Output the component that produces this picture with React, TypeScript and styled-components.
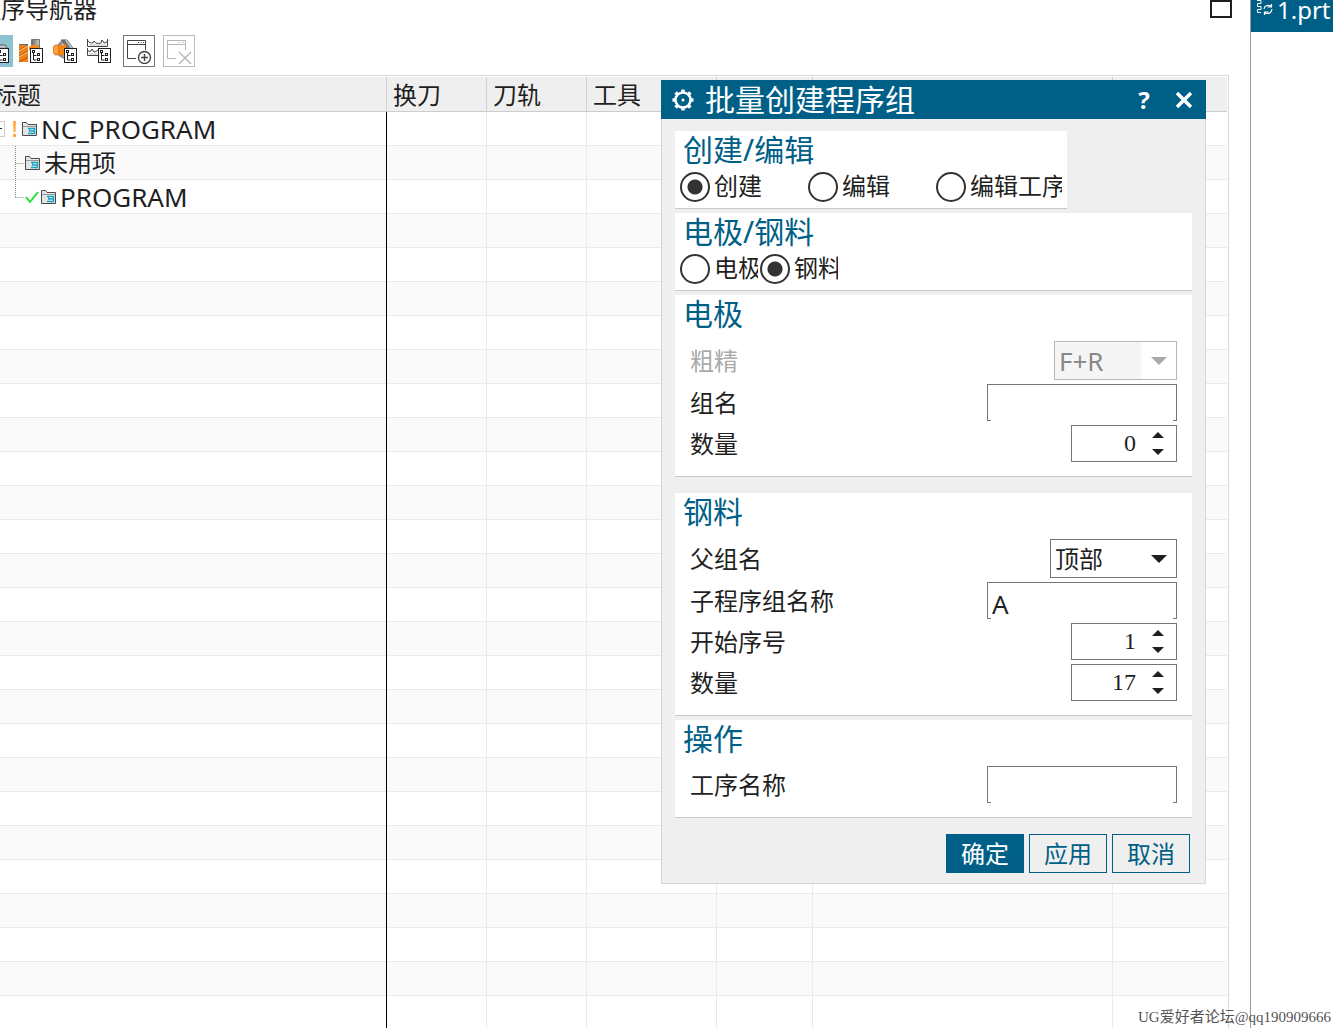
import React, { useState } from "react";
import styled, { createGlobalStyle } from "styled-components";

const blue = "#005f87";
const ink = "#1f1f1f";
const sans = `"Noto Sans", "Noto Sans CJK SC", sans-serif`;

const GlobalStyle = createGlobalStyle`
  *, *::before, *::after { box-sizing: border-box; }
  body {
    margin: 0;
    background: #fff;
    color: ${ink};
    font-family: ${sans};
    font-size: 24px;
    overflow: hidden;
  }
  button, input, select { font: inherit; color: inherit; margin: 0; }
`;

const Workspace = styled.div`
  position: relative;
  display: flex;
  height: 100vh;
  overflow: hidden;
`;

/* The navigator is docked partly beyond the left edge of the window. */
const Navigator = styled.section`
  flex: 1;
  min-width: 0;
  margin-left: -24px;
  display: flex;
  flex-direction: column;
`;

const NavigatorHeader = styled.header`
  display: flex;
  justify-content: space-between;
  align-items: flex-start;
  height: 28px;
  padding: 0 18px 0 1px;
`;

const NavigatorTitle = styled.h1`
  margin: 0;
  font-size: 24px;
  line-height: 18px;
  font-weight: 400;
`;

const MaximizeButton = styled.button`
  width: 22px;
  height: 18px;
  padding: 0;
  background: none;
  border: 2px solid ${ink};
`;

const Toolbar = styled.div`
  display: flex;
  align-items: center;
  padding: 7px 0 8px 5px;
`;

const ToolButton = styled.button<{ $active?: boolean; $framed?: string }>`
  display: grid;
  place-items: center;
  width: 32px;
  height: 32px;
  padding: 0;
  margin-right: ${(p) => (p.$framed ? 8 : 2)}px;
  border: ${(p) => (p.$framed ? `1px solid ${p.$framed}` : "none")};
  background: ${(p) => (p.$active ? "#8cc3d3" : "transparent")};
`;

const ToolGroup = styled.div`
  display: flex;
  margin-right: 6px;
`;

const GridFrame = styled.div`
  flex: 1;
  min-height: 0;
  margin-right: 21px;
  padding: 1px 1px 0 0;
  border: solid #d9d9d9;
  border-width: 1px 1px 0 0;
  overflow: hidden;
`;

const Grid = styled.table`
  width: 100%;
  table-layout: fixed;
  border-spacing: 0;
`;

const HeadCell = styled.th`
  height: 35px;
  padding: 0 6px;
  background: #efefef;
  border-right: 1px solid #d0d0d0;
  box-shadow: inset 0 -1px #ccc;
  font-weight: 400;
  line-height: 34px;
  text-align: left;
  &:first-child { padding-left: 17px; }
  &:last-child { border-right: none; }
`;

const BodyRow = styled.tr`
  &:nth-child(even) { background: #fafafa; }
`;

const BodyCell = styled.td`
  height: 34px;
  padding: 0;
  border-right: 1px solid #eaeaea;
  box-shadow: inset 0 -1px #eaeaea;
  line-height: 34px;
  &:first-child { border-right-color: #000; }
  &:last-child { border-right: none; }
`;

const TreeItem = styled.div<{ $indent: number }>`
  display: flex;
  align-items: center;
  height: 34px;
  padding-left: ${(p) => p.$indent}px;
  svg { flex: none; }
`;

const TreeLabel = styled.span<{ $latin?: boolean }>`
  margin-left: 3px;
  font-size: ${(p) => (p.$latin ? 26 : 24)}px;
  line-height: 32px;
  white-space: nowrap;
`;

const GraphicsPane = styled.aside`
  flex: 0 0 83px;
  border-left: 1px solid #999;
  overflow: hidden;
`;

const PartTab = styled.div`
  display: flex;
  align-items: flex-start;
  gap: 3px;
  height: 32px;
  padding-left: 5px;
  background: ${blue};
  color: #fff;
  line-height: 20px;
  white-space: nowrap;
`;

const Dialog = styled.form`
  position: absolute;
  top: 80px;
  right: 127px;
  width: 545px;
  background: #efefef;
  border: solid #d5d5d5;
  border-width: 0 1px 1px;
`;

const DialogHeader = styled.header`
  display: flex;
  align-items: center;
  height: 39px;
  margin: 0 -1px;
  padding: 0 10px;
  background: ${blue};
  color: #fff;
`;

const DialogTitle = styled.h2`
  flex: 1;
  margin: 0 0 0 10px;
  font-size: 30px;
  line-height: 39px;
  font-weight: 400;
`;

const HeaderButton = styled.button`
  display: grid;
  place-items: center;
  width: 24px;
  height: 24px;
  margin-left: 16px;
  padding: 0;
  background: none;
  border: none;
  font-weight: 700;
  line-height: 24px;
`;

const DialogBody = styled.div`
  display: flex;
  flex-direction: column;
  gap: 4px;
  padding: 12px 13px 0;
`;

const Group = styled.section<{ $compact?: boolean; $spaced?: boolean }>`
  align-self: ${(p) => (p.$compact ? "flex-start" : "stretch")};
  margin-bottom: ${(p) => (p.$spaced ? 12 : 0)}px;
  background: #fff;
  border-bottom: 1px solid #c8c8c8;
`;

const GroupTitle = styled.h3`
  margin: 0;
  padding-left: 8px;
  color: ${blue};
  font-size: 30px;
  line-height: 37px;
  padding-bottom: 1px;
  font-weight: 400;
`;

const RadioRow = styled.div`
  display: flex;
  gap: 2px;
  padding: 0 5px 3px;
`;

const RadioLabel = styled.label<{ $width: number }>`
  display: flex;
  align-items: center;
  gap: 4px;
  width: ${(p) => p.$width}px;
  height: 36px;
  overflow: hidden;
  white-space: nowrap;
`;

const RadioText = styled.span`
  height: 36px;
  line-height: 34px;
`;

const Radio = styled.input`
  appearance: none;
  flex: none;
  width: 30px;
  height: 30px;
  border: 2px solid #333;
  border-radius: 50%;
  background: #fff;
  &:checked { background: radial-gradient(circle, #333 7px, #fff 8px); }
`;

const Fields = styled.div`
  display: flex;
  flex-direction: column;
  gap: 4px;
  padding: 8px 15px 14px;
`;

const Field = styled.div<{ $disabled?: boolean }>`
  display: flex;
  align-items: center;
  justify-content: space-between;
  color: ${(p) => (p.$disabled ? "#aaa" : ink)};
`;

const FieldLabel = styled.label`
  line-height: 36px;
`;

const TextBox = styled.input`
  width: 190px;
  height: 37px;
  padding: 5px 4px 0;
  border: 1px solid #767676;
  border-bottom: none;
  border-radius: 0;
  background:
    linear-gradient(#767676, #767676) left bottom / 3px 1px no-repeat,
    linear-gradient(#767676, #767676) right bottom / 3px 1px no-repeat,
    #fff;
  outline: none;
  font-size: 26px;
  line-height: 30px;
`;

const SelectShell = styled.div<{ $width: number; $disabled?: boolean }>`
  display: grid;
  grid-template-columns: 1fr 35px;
  align-items: center;
  width: ${(p) => p.$width}px;
  height: 39px;
  border: 1px solid ${(p) => (p.$disabled ? "#b8b8b8" : "#767676")};
  background: #fff;
  svg { grid-area: 1 / 2; justify-self: center; pointer-events: none; }
`;

const Select = styled.select`
  appearance: none;
  grid-area: 1 / 1 / 2 / 3;
  width: 100%;
  height: 37px;
  padding: 0 4px;
  border: none;
  border-radius: 0;
  background: transparent;
  outline: none;
  &:disabled {
    opacity: 1;
    color: #888;
    font-size: 26px;
    background: linear-gradient(to right, #f5f5f5 calc(100% - 35px), #fff 0);
  }
`;

const SpinShell = styled.div`
  display: flex;
  width: 106px;
  height: 37px;
  border: 1px solid #767676;
  background: #fff;
`;

const SpinInput = styled.input`
  appearance: textfield;
  flex: 1;
  min-width: 0;
  padding: 0;
  border: none;
  background: none;
  outline: none;
  font-family: "Liberation Serif", serif;
  text-align: right;
  &::-webkit-inner-spin-button { appearance: none; margin: 0; }
`;

const SpinButtons = styled.div`
  display: flex;
  flex-direction: column;
  width: 40px;
  padding-left: 5px;
`;

const SpinButton = styled.button`
  flex: 1;
  display: grid;
  place-items: center;
  width: 34px;
  padding: 0;
  border: none;
  background: none;
`;

const DialogFooter = styled.footer`
  display: flex;
  justify-content: flex-end;
  gap: 5px;
  padding: 16px 15px 10px;
`;

const ActionButton = styled.button<{ $primary?: boolean }>`
  width: 78px;
  height: 39px;
  padding: 0;
  border: 1px solid ${blue};
  background: ${(p) => (p.$primary ? blue : "#efefef")};
  color: ${(p) => (p.$primary ? "#fff" : blue)};
  line-height: 36px;
`;

const ForumMark = styled.small`
  position: absolute;
  right: 2px;
  bottom: 0;
  color: #555;
  font-family: "Liberation Serif", "Noto Sans CJK SC", serif;
  font-size: 15px;
  line-height: 22px;
`;

const TreeBadge = () => (
  <g>
    <rect x="11.5" y="9.5" width="12" height="14" fill="#fff" stroke="#1f1f1f" />
    <path d="M14.5 13v8h3M14.5 16.5h3" fill="none" stroke="#1f1f1f" />
    <rect x="13.5" y="11.5" width="2" height="2" fill="#fff" stroke="#1f1f1f" />
    <rect x="18.5" y="14.5" width="2" height="2" fill="#fff" stroke="#1f1f1f" />
    <rect x="18.5" y="19.5" width="2" height="2" fill="#fff" stroke="#1f1f1f" />
  </g>
);

const ProgramViewIcon = () => (
  <svg width="24" height="24" viewBox="0 0 24 24" aria-hidden="true">
    <path d="M2 6h18l3 4v10H2z" fill="#d4d4d4" stroke="#555" />
    <path d="M3 9h19" stroke="#888" />
    <TreeBadge />
  </svg>
);

const ToolViewIcon = () => (
  <svg width="24" height="24" viewBox="0 0 24 24" aria-hidden="true">
    <defs>
      <linearGradient id="steel">
        <stop offset="0" stopColor="#666" />
        <stop offset="1" stopColor="#ccc" />
      </linearGradient>
    </defs>
    <path d="M12.500 .5h8v9h-8z" fill="url(#steel)" stroke="#777" />
    <path d="M10 8l3-2h7v5H10z" fill="#f58a1f" />
    <path d="M0 5h9v18H0z" fill="#f08218" />
    <path d="M0 11l9-5M0 17l9-5M0 23l9-5" stroke="#a85c18" />
    <path d="M0 12l9-5M0 18l9-5" stroke="#ffc17c" />
    <path d="M0 5.500h9" stroke="#666" />
    <TreeBadge />
  </svg>
);

const GeometryViewIcon = () => (
  <svg width="24" height="24" viewBox="0 0 24 24" aria-hidden="true">
    <path d="M8 1h6l8 11h-6z" fill="#777" stroke="#555" />
    <path d="M14 1l8 11h-3l-7-11z" fill="#bbb" />
    <path d="M9 1L4 6v10l7 4z" fill="#8a8a8a" />
    <path d="M2 6h9l2-1v13l-3-2H2z" fill="#f58616" />
    <ellipse cx="3" cy="11" rx="3" ry="5" fill="#ffa040" stroke="#dc7109" />
    <TreeBadge />
  </svg>
);

const MethodViewIcon = () => (
  <svg width="24" height="24" viewBox="0 0 24 24" aria-hidden="true" fill="none" stroke="#444">
    <path d="M.5 0v7.500h20V0M0 1q3 4 6 3l1-2 2 2q3 1 5 0l1-3 2 3q3 0 4-3" />
    <path d="M.5 9v7.500h11M0 10q2 4 4 2l1-2 2 3q2 0 4-2" />
    <path d="M2 6h17M2 15h8" stroke="#bbb" />
    <TreeBadge />
  </svg>
);

const WindowIcon = ({ mode }: { mode: "add" | "remove" }) => (
  <svg
    width="26"
    height="26"
    viewBox="0 0 26 26"
    aria-hidden="true"
    fill="none"
    stroke={mode === "add" ? "#444" : "#b5b5b5"}
  >
    <path d="M10 20.500H1.500V2.500H19.500V12M1.500 6.500H19.500M12 4.500h1M14.500 4.500h1M17 4.500h1" />
    {mode === "add" ? (
      <>
        <circle cx="18.500" cy="19.500" r="6" fill="#fff" strokeWidth="1.400" />
        <path d="M18.500 16v7M15 19.500h7" strokeWidth="1.400" />
      </>
    ) : (
      <path d="M13 14l12 12M25 14L13 26" strokeWidth="1.400" />
    )}
  </svg>
);

const CollapseBox = () => (
  <svg width="15" height="16" viewBox="0 0 15 16" aria-hidden="true">
    <rect x=".5" y=".5" width="14" height="15" fill="#fff" stroke="#ccc" />
    <path d="M4 7.500h8" stroke={ink} />
  </svg>
);

const Warning = () => (
  <svg width="17" height="18" viewBox="0 0 17 18" aria-hidden="true">
    <path d="M8 1h3l-.5 11h-2zM8 14h3v3H8z" fill="#ffab40" />
  </svg>
);

const Branch = ({ last }: { last?: boolean }) => (
  <svg width="10" height="34" viewBox="0 0 10 34" aria-hidden="true">
    <path
      d={`M.5 0V${last ? 17 : 34}M.5 17.500H9`}
      fill="none"
      stroke="#888"
      strokeDasharray="1 1"
    />
  </svg>
);

const CheckIcon = () => (
  <svg width="16" height="16" viewBox="0 0 16 16" aria-hidden="true">
    <path d="M1 8l4 5L13 3" fill="none" stroke="#22e033" strokeWidth="2" />
  </svg>
);

const FolderIcon = () => (
  <svg width="16" height="16" viewBox="0 0 16 16" aria-hidden="true">
    <path d="M.5 14.500V1.500h4l1.500 2h8.500v11z" fill="#e4e4e4" stroke="#4a4a4a" />
    <path d="M1 5.500h13" stroke="#999" />
    <path d="M6 7.500h6.500v5M7 10h5.500M6 12.500h7" fill="none" stroke="#18a5c8" strokeWidth="1.400" />
    <path d="M7.500 7v3" stroke="#18a5c8" />
  </svg>
);

const PartIcon = () => (
  <svg width="18" height="16" viewBox="0 0 18 16" aria-hidden="true" fill="none" stroke="#fff">
    <path d="M1 .5h4v3H1.500v3H5v3H1.500v3H5" />
    <path d="M8 9q1-5 7-3M15.500 4v3h-4M16 9q-1 6-7 4M8.500 15v-3h4" strokeWidth="1.200" />
  </svg>
);

const GearIcon = () => (
  <svg width="24" height="24" viewBox="0 0 24 24" aria-hidden="true" stroke="#fff" fill="none">
    <circle cx="12" cy="12" r="7.500" strokeWidth="2.500" />
    <circle cx="12" cy="12" r="1.500" fill="#fff" stroke="none" />
    <path
      d="M12 1.500v3M12 19.500v3M1.500 12h3M19.500 12h3M4.600 4.600l2 2M17.400 17.400l2 2M4.600 19.400l2-2M17.400 6.600l2-2"
      strokeWidth="3.500"
    />
  </svg>
);

const CloseIcon = () => (
  <svg width="18" height="18" viewBox="0 0 18 18" aria-hidden="true">
    <path d="M2 2l14 14M16 2L2 16" stroke="#fff" strokeWidth="3.500" />
  </svg>
);

const DropArrow = ({ color }: { color: string }) => (
  <svg width="16" height="8" viewBox="0 0 16 8" aria-hidden="true">
    <path d="M0 0h16L8 8z" fill={color} />
  </svg>
);

const SpinArrow = ({ down }: { down?: boolean }) => (
  <svg width="12" height="6" viewBox="0 0 12 6" aria-hidden="true">
    <path d={down ? "M0 0h12L6 6z" : "M0 6h12L6 0z"} fill={ink} />
  </svg>
);

interface RadioSetProps {
  name: string;
  options: string[];
  width: number;
  initial: string;
}

const RadioSet = ({ name, options, width, initial }: RadioSetProps) => {
  const [value, setValue] = useState(initial);
  return (
    <RadioRow role="radiogroup">
      {options.map((option) => (
        <RadioLabel key={option} $width={width}>
          <Radio
            type="radio"
            name={name}
            checked={value === option}
            onChange={() => setValue(option)}
          />
          <RadioText>{option}</RadioText>
        </RadioLabel>
      ))}
    </RadioRow>
  );
};

interface FieldProps {
  id: string;
  label: string;
}

const TextField = ({ id, label, initial = "" }: FieldProps & { initial?: string }) => (
  <Field>
    <FieldLabel htmlFor={id}>{label}</FieldLabel>
    <TextBox id={id} type="text" defaultValue={initial} />
  </Field>
);

const SelectField = ({
  id,
  label,
  option,
  width,
  disabled,
}: FieldProps & { option: string; width: number; disabled?: boolean }) => (
  <Field $disabled={disabled}>
    <FieldLabel htmlFor={id}>{label}</FieldLabel>
    <SelectShell $width={width} $disabled={disabled}>
      <Select id={id} disabled={disabled}>
        <option>{option}</option>
      </Select>
      <DropArrow color={disabled ? "#aaa" : ink} />
    </SelectShell>
  </Field>
);

const SpinField = ({ id, label, initial }: FieldProps & { initial: number }) => {
  const [value, setValue] = useState(initial);
  return (
    <Field>
      <FieldLabel htmlFor={id}>{label}</FieldLabel>
      <SpinShell>
        <SpinInput
          id={id}
          type="number"
          value={value}
          onChange={(e) => setValue(Number(e.target.value))}
        />
        <SpinButtons>
          <SpinButton type="button" aria-label="+" onClick={() => setValue(value + 1)}>
            <SpinArrow />
          </SpinButton>
          <SpinButton type="button" aria-label="-" onClick={() => setValue(value - 1)}>
            <SpinArrow down />
          </SpinButton>
        </SpinButtons>
      </SpinShell>
    </Field>
  );
};

const columns = [
  { label: "标题", width: 411 },
  { label: "换刀", width: 100 },
  { label: "刀轨", width: 100 },
  { label: "工具", width: 130 },
  { label: "", width: 96 },
  { label: "", width: 300 },
  { label: "", width: undefined },
];

const treeRows = [
  <TreeItem $indent={14}>
    <CollapseBox />
    <Warning />
    <FolderIcon />
    <TreeLabel $latin>NC_PROGRAM</TreeLabel>
  </TreeItem>,
  <TreeItem $indent={39}>
    <Branch />
    <FolderIcon />
    <TreeLabel>未用项</TreeLabel>
  </TreeItem>,
  <TreeItem $indent={39}>
    <Branch last />
    <CheckIcon />
    <FolderIcon />
    <TreeLabel $latin>PROGRAM</TreeLabel>
  </TreeItem>,
];

const ROW_COUNT = 40;

const OperationGrid = () => (
  <GridFrame>
    <Grid>
      <colgroup>
        {columns.map((column, i) => (
          <col key={i} width={column.width} />
        ))}
      </colgroup>
      <thead>
        <tr>
          {columns.map((column, i) => (
            <HeadCell key={i}>{column.label}</HeadCell>
          ))}
        </tr>
      </thead>
      <tbody>
        {Array.from({ length: ROW_COUNT }, (_, row) => (
          <BodyRow key={row}>
            {columns.map((_column, i) => (
              <BodyCell key={i}>{i === 0 ? treeRows[row] : null}</BodyCell>
            ))}
          </BodyRow>
        ))}
      </tbody>
    </Grid>
  </GridFrame>
);

export default function App() {
  return (
    <>
      <GlobalStyle />
      <Workspace>
        <Navigator>
          <NavigatorHeader>
            <NavigatorTitle>程序导航器</NavigatorTitle>
            <MaximizeButton type="button" />
          </NavigatorHeader>
          <Toolbar>
            <ToolGroup>
              <ToolButton type="button" $active><ProgramViewIcon /></ToolButton>
              <ToolButton type="button"><ToolViewIcon /></ToolButton>
              <ToolButton type="button"><GeometryViewIcon /></ToolButton>
              <ToolButton type="button"><MethodViewIcon /></ToolButton>
            </ToolGroup>
            <ToolButton type="button" $framed="#777"><WindowIcon mode="add" /></ToolButton>
            <ToolButton type="button" $framed="#bbb"><WindowIcon mode="remove" /></ToolButton>
          </Toolbar>
          <OperationGrid />
        </Navigator>

        <GraphicsPane>
          <PartTab>
            <PartIcon />
            1.prt
          </PartTab>
        </GraphicsPane>

        <Dialog onSubmit={(e) => e.preventDefault()}>
          <DialogHeader>
            <GearIcon />
            <DialogTitle>批量创建程序组</DialogTitle>
            <HeaderButton type="button">?</HeaderButton>
            <HeaderButton type="button"><CloseIcon /></HeaderButton>
          </DialogHeader>
          <DialogBody>
            <Group $compact>
              <GroupTitle>创建/编辑</GroupTitle>
              <RadioSet name="mode" options={["创建", "编辑", "编辑工序"]} width={126} initial="创建" />
            </Group>
            <Group>
              <GroupTitle>电极/钢料</GroupTitle>
              <RadioSet name="material" options={["电极", "钢料"]} width={78} initial="钢料" />
            </Group>
            <Group $spaced>
              <GroupTitle>电极</GroupTitle>
              <Fields>
                <SelectField id="finish" label="粗精" option="F+R" width={123} disabled />
                <TextField id="group-name" label="组名" />
                <SpinField id="electrode-count" label="数量" initial={0} />
              </Fields>
            </Group>
            <Group>
              <GroupTitle>钢料</GroupTitle>
              <Fields>
                <SelectField id="parent" label="父组名" option="顶部" width={127} />
                <TextField id="child-name" label="子程序组名称" initial="A" />
                <SpinField id="start-index" label="开始序号" initial={1} />
                <SpinField id="steel-count" label="数量" initial={17} />
              </Fields>
            </Group>
            <Group>
              <GroupTitle>操作</GroupTitle>
              <Fields>
                <TextField id="operation-name" label="工序名称" />
              </Fields>
            </Group>
          </DialogBody>
          <DialogFooter>
            <ActionButton type="submit" $primary>确定</ActionButton>
            <ActionButton type="button">应用</ActionButton>
            <ActionButton type="button">取消</ActionButton>
          </DialogFooter>
        </Dialog>

        <ForumMark>UG爱好者论坛@qq190909666</ForumMark>
      </Workspace>
    </>
  );
}
